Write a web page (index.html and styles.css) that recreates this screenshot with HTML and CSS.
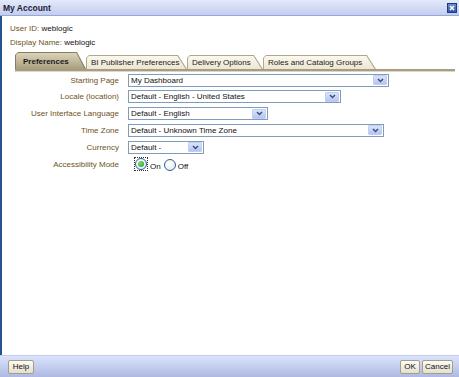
FILE: index.html
```html
<!DOCTYPE html>
<html>
<head>
<meta charset="utf-8">
<title>My Account</title>
<link rel="stylesheet" href="styles.css">
</head>
<body>
<div class="dialog">
  <div class="titlebar">
    <span class="title">My Account</span>
    <span class="close">
      <svg width="10" height="10" viewBox="0 0 10 10">
        <defs><linearGradient id="cg" x1="0" y1="0" x2="0" y2="1"><stop offset="0" stop-color="#6f8fd0"/><stop offset="1" stop-color="#2f55a6"/></linearGradient></defs>
        <rect x="0.5" y="0.5" width="9" height="9" fill="url(#cg)" stroke="#1d3b7e"/>
        <path d="M3 3 L7 7 M7 3 L3 7" stroke="#fff" stroke-width="1.6"/>
      </svg>
    </span>
  </div>
  <div class="body">
    <div class="info">
      <div><span class="lbl">User ID:</span> weblogic</div>
      <div><span class="lbl">Display Name:</span> weblogic</div>
    </div>
    <div class="tabs">
      <div class="tab active w-pref"><div class="tab-in"><span>Preferences</span></div></div>
      <div class="tab w-bi"><div class="tab-in"><span>BI Publisher Preferences</span></div></div>
      <div class="tab w-del"><div class="tab-in"><span>Delivery Options</span></div></div>
      <div class="tab w-roles"><div class="tab-in"><span>Roles and Catalog Groups</span></div></div>
    </div>
    <div class="tabline"></div>
    <div class="form">
      <span class="flabel">Starting Page</span>
      <div class="sel w-start"><span>My Dashboard</span><span class="arrow"><svg width="7" height="5" viewBox="0 0 7 5"><path d="M1 1 L3.5 3.5 L6 1" fill="none" stroke="#3c4f7a" stroke-width="1.5"/></svg></span></div>
      <span class="flabel">Locale (location)</span>
      <div class="sel w-locale"><span>Default - English - United States</span><span class="arrow"><svg width="7" height="5" viewBox="0 0 7 5"><path d="M1 1 L3.5 3.5 L6 1" fill="none" stroke="#3c4f7a" stroke-width="1.5"/></svg></span></div>
      <span class="flabel">User Interface Language</span>
      <div class="sel w-lang"><span>Default - English</span><span class="arrow"><svg width="7" height="5" viewBox="0 0 7 5"><path d="M1 1 L3.5 3.5 L6 1" fill="none" stroke="#3c4f7a" stroke-width="1.5"/></svg></span></div>
      <span class="flabel">Time Zone</span>
      <div class="sel w-tz"><span>Default - Unknown Time Zone</span><span class="arrow"><svg width="7" height="5" viewBox="0 0 7 5"><path d="M1 1 L3.5 3.5 L6 1" fill="none" stroke="#3c4f7a" stroke-width="1.5"/></svg></span></div>
      <span class="flabel">Currency</span>
      <div class="sel w-cur"><span>Default -</span><span class="arrow"><svg width="7" height="5" viewBox="0 0 7 5"><path d="M1 1 L3.5 3.5 L6 1" fill="none" stroke="#3c4f7a" stroke-width="1.5"/></svg></span></div>
      <span class="flabel">Accessibility Mode</span>
      <div class="radios">
        <span class="focus"><span class="radio checked"></span></span>
        <span class="rtext">On</span>
        <span class="radio"></span>
        <span class="rtext">Off</span>
      </div>
    </div>
  </div>
  <div class="footer">
    <button class="btn w-help">Help</button>
    <div class="right">
      <button class="btn w-ok">OK</button>
      <button class="btn w-cancel">Cancel</button>
    </div>
  </div>
</div>
</body>
</html>
```
FILE: styles.css
```css
* { box-sizing: border-box; }
html, body { margin: 0; padding: 0; background: #fff; }
body {
  font-family: "Liberation Sans", Arial, sans-serif;
  font-size: 8px;
  color: #111;
}
.dialog {
  width: 459px;
  height: 377px;
  display: flex;
  flex-direction: column;
  background: #fff;
  overflow: hidden;
}
.titlebar {
  height: 16px;
  flex: none;
  display: flex;
  align-items: center;
  justify-content: space-between;
  padding: 0 2px 0 3px;
  background: linear-gradient(#e4eafb, #c3cdee);
  border-bottom: 1px solid #97a8d8;
}
.title {
  font-weight: bold;
  font-size: 8.5px;
  color: #1b2334;
}
.close { display: flex; width: 10px; height: 10px; }
.body {
  flex: 1;
  border-left: 2px solid #24548e;
  padding-top: 6px;
}
.info {
  margin-left: 8px;
  line-height: 14px;
}
.lbl { color: #6e5421; }

.tabs {
  display: flex;
  align-items: flex-end;
  height: 17px;
  margin: 2px 0 0 13px;
}
.tab {
  height: 14px;
  padding: 1px 1px 0 1px;
  background: #b0a78c;
  clip-path: polygon(0 100%, 0 3px, 3px 0, calc(100% - 9px) 0, 100% 100%);
}
.tab-in {
  height: 100%;
  display: flex;
  align-items: center;
  padding-left: 4px;
  background: linear-gradient(#fbf8ee, #ece6d2);
  color: #222;
  clip-path: polygon(0 100%, 0 2px, 2px 0, calc(100% - 8.6px) 0, calc(100% - 0.3px) 100%);
}
.tab.active {
  height: 17px;
  background: #877d5f;
}
.tab.active .tab-in {
  background: linear-gradient(#dcd4b9, #a99f80);
  font-weight: bold;
  color: #1a1a1a;
  padding-left: 7px;
  padding-top: 1px;
}
.w-pref { width: 71px; }
.w-bi { width: 101px; }
.w-del { width: 76px; }
.w-roles { width: 113px; }

.tabline {
  margin-left: 13px;
  width: 440px;
  height: 3px;
  border-top: 2px solid #a69d83;
  background: #ddd7c6;
}

.form {
  display: grid;
  grid-template-columns: 117px auto;
  column-gap: 9px;
  row-gap: 3.75px;
  margin-top: 1.5px;
  align-items: center;
  justify-items: start;
}
.flabel {
  justify-self: end;
  color: #6e5421;
  white-space: nowrap;
}
.sel {
  height: 13px;
  border: 1px solid #7f9db9;
  background: #fff;
  display: flex;
  align-items: center;
  justify-content: space-between;
  padding: 0 1px 0 2px;
  white-space: nowrap;
}
.arrow {
  width: 14px;
  height: 10px;
  display: flex;
  align-items: center;
  justify-content: center;
  background: linear-gradient(#dae3fb, #b4c5f1);
  border: 1px solid #c1cef2;
  border-radius: 1px;
}
.w-start { width: 261px; }
.w-locale { width: 213px; }
.w-lang { width: 140px; }
.w-tz { width: 256px; }
.w-cur { width: 76px; }

.radios {
  height: 14px;
  display: flex;
  align-items: flex-end;
  padding-left: 6px;
}
.focus {
  display: flex;
  padding: 1px;
  outline: 1px dotted #333;
  outline-offset: -1px;
}
.radio {
  width: 12px;
  height: 12px;
  border-radius: 50%;
  border: 1px solid #2b5e9b;
  background: radial-gradient(circle at 35% 35%, #ffffff, #e6e6df);
  display: flex;
  align-items: center;
  justify-content: center;
}
.radio.checked::after {
  content: "";
  width: 6px;
  height: 6px;
  border-radius: 50%;
  background: radial-gradient(circle at 35% 35%, #7be07b, #1f9a1f);
}
.rtext {
  margin: 0 3px 0 2px;
  line-height: 9px;
}

.footer {
  height: 22px;
  flex: none;
  display: flex;
  align-items: center;
  justify-content: space-between;
  padding: 0 6px 0 8px;
  border-top: 1px solid #c3cdee;
  background: linear-gradient(#dbe3fb, #aeb9e2);
}
.right { display: flex; gap: 2px; }
.btn {
  height: 14px;
  padding: 0;
  margin: 0;
  font-family: "Liberation Sans", Arial, sans-serif;
  font-size: 8px;
  color: #111;
  border: 1px solid #a39e87;
  border-radius: 2px;
  background: linear-gradient(#fcfbf5, #e4e0cf);
}
.w-help { width: 26px; }
.w-ok { width: 20px; }
.w-cancel { width: 31px; }
```
